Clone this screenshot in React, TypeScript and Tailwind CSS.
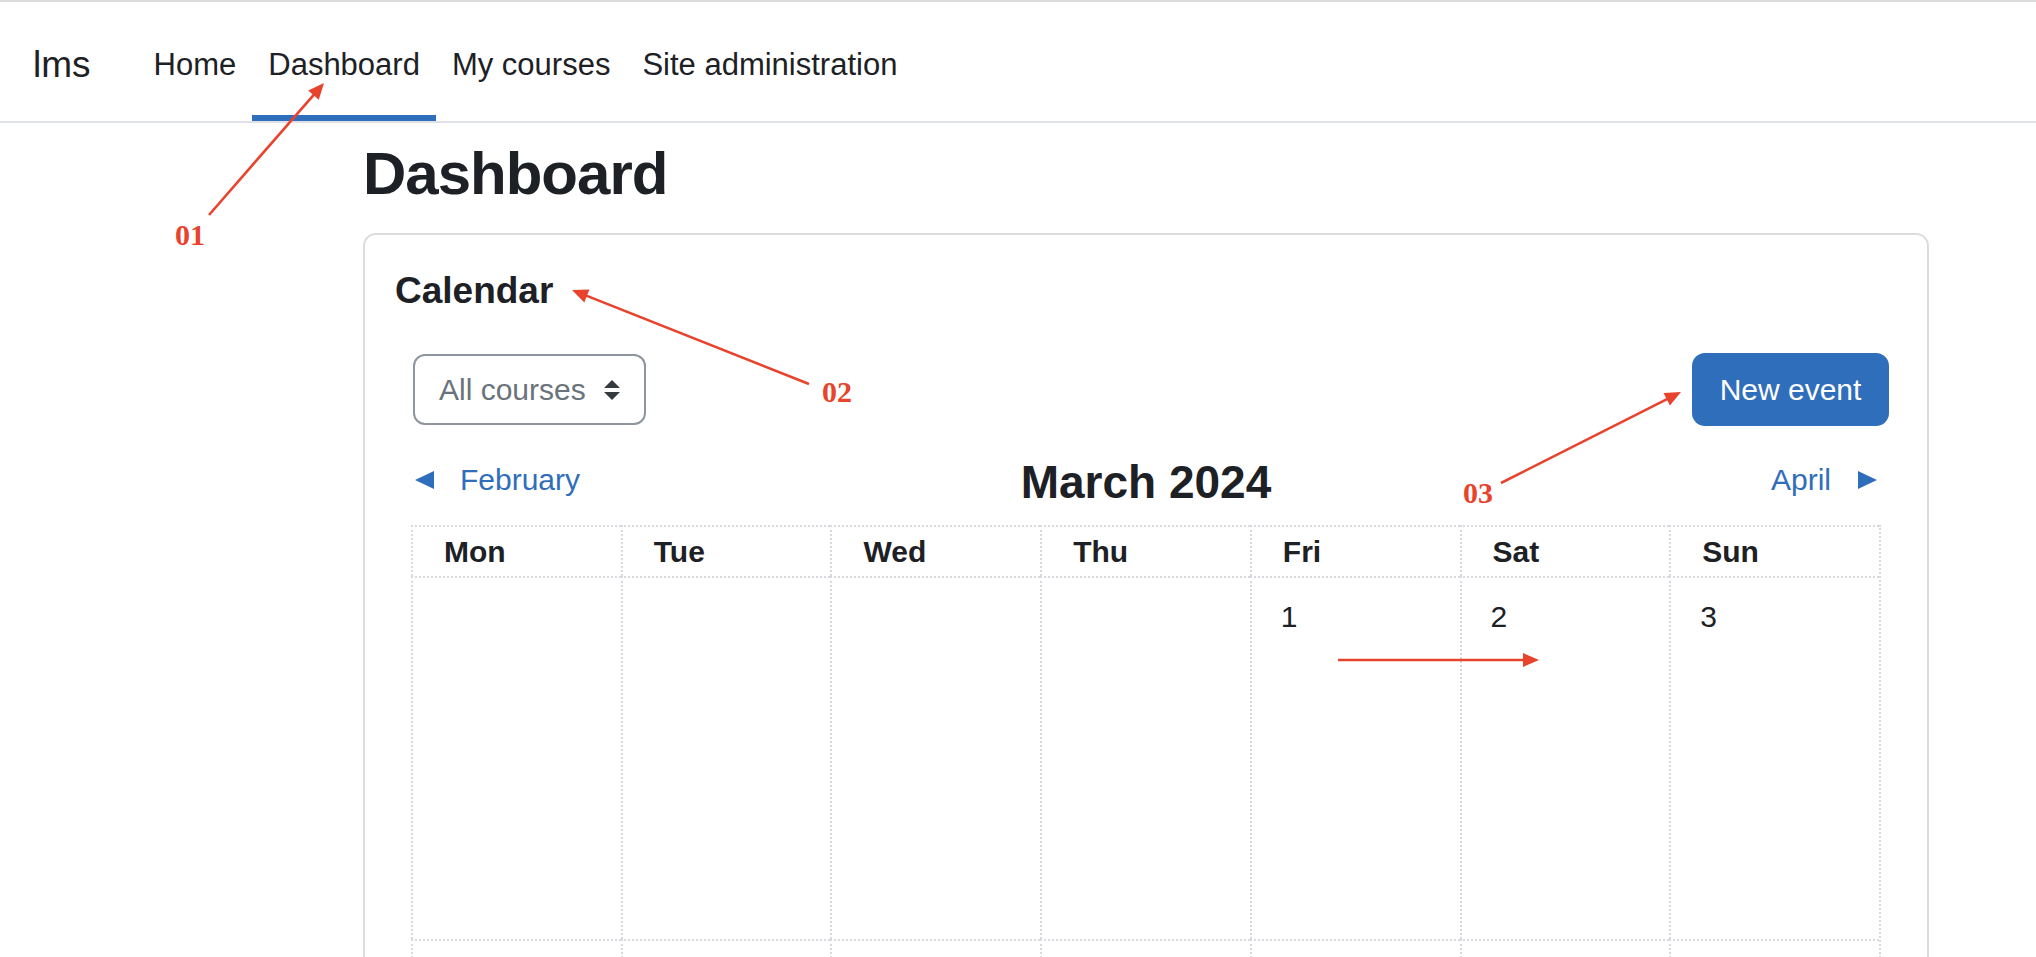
import React from 'react'

const navLinks = ['Home', 'Dashboard', 'My courses', 'Site administration']
const days = ['Mon', 'Tue', 'Wed', 'Thu', 'Fri', 'Sat', 'Sun']

// march 2024 starts on a friday, only the first week is in view
const firstWeek: (number | null)[] = [null, null, null, null, 1, 2, 3]

type ArrowProps = { x1: number; y1: number; x2: number; y2: number }

const Arrow = ({ x1, y1, x2, y2 }: ArrowProps) => {
  const len = Math.hypot(x2 - x1, y2 - y1)
  const ux = (x2 - x1) / len
  const uy = (y2 - y1) / len
  const bx = x2 - ux * 16
  const by = y2 - uy * 16
  const head = `${x2},${y2} ${bx - uy * 7},${by + ux * 7} ${bx + uy * 7},${by - ux * 7}`
  return (
    <>
      <line x1={x1} y1={y1} x2={bx + ux * 2} y2={by + uy * 2} stroke="#e8432d" strokeWidth={2.6} />
      <polygon points={head} fill="#e8432d" />
    </>
  )
}

const Annotations = () => {
  return (
    <svg className="absolute left-0 top-0 pointer-events-none" width={2036} height={957}>
      <Arrow x1={209} y1={215} x2={324} y2={83} />
      <Arrow x1={809} y1={384} x2={572} y2={290} />
      <Arrow x1={1501} y1={483} x2={1681} y2={392} />
      <Arrow x1={1338} y1={660} x2={1539} y2={660} />
      <g fill="#e8432d" fontFamily="'Liberation Serif', 'Times New Roman', serif" fontWeight="bold" fontSize={30}>
        <text x={175} y={245}>01</text>
        <text x={822} y={402}>02</text>
        <text x={1463} y={503}>03</text>
      </g>
    </svg>
  )
}

const Triangle = ({ dir }: { dir: 'left' | 'right' }) => (
  <svg width={19} height={18} viewBox="0 0 19 18">
    {dir === 'left' ? <polygon points="0,9 19,0 19,18" fill="#2f6ebb" /> : <polygon points="19,9 0,0 0,18" fill="#2f6ebb" />}
  </svg>
)

export default function App() {
  return (
    <div className="relative h-screen w-full overflow-hidden bg-white text-[#1d2125] font-['Liberation_Sans',Arial,sans-serif]">
      {/* top navbar */}
      <header className="flex h-[123px] border-t-2 border-b-2 border-t-[#dcdcdc] border-b-[#dee2e6]">
        <div className="flex items-center pl-[33px] mr-[47px] pt-[12px] pb-[6px] text-[37px] leading-[37px]">lms</div>
        {navLinks.map((l) => (
          <div
            key={l}
            className={
              'flex items-center px-[16px] pt-[12px] border-b-[6px] text-[31px] leading-[31px] ' +
              (l === 'Dashboard' ? 'border-b-[#2f6ebb]' : 'border-b-transparent')
            }
          >
            {l}
          </div>
        ))}
      </header>

      <main className="pl-[363px] pr-[107px]">
        <h1 className="mt-[21px] text-[60px] leading-[60px] font-bold tracking-[-1px]">Dashboard</h1>

        <section className="mt-[29px] border-2 border-[#dcdcdc] rounded-[13px] pt-[37px]">
          <h2 className="pl-[30px] text-[37px] leading-[37px] font-bold">Calendar</h2>

          <div className="px-[46px]">
            {/* filter + new event */}
            <div className="mt-[44px] flex items-center justify-between">
              <div className="ml-[2px] flex h-[71px] w-[233px] items-center border-2 border-[#8f959e] rounded-[12px] pl-[24px] text-[30px] leading-[30px] text-[#6a737b]">
                <span>All courses</span>
                <svg className="ml-[18px]" width={16} height={20} viewBox="0 0 16 20">
                  <polygon points="8,0 16,8 0,8" fill="#343a40" />
                  <polygon points="0,12 16,12 8,20" fill="#343a40" />
                </svg>
              </div>
              <button className="-mr-[8px] flex h-[73px] w-[197px] items-center justify-center rounded-[13px] bg-[#2f6ebb] text-[30px] leading-[30px] text-white">
                New event
              </button>
            </div>

            {/* month navigation */}
            <div className="mt-[33px] grid h-[46px] grid-cols-3 items-center">
              <div className="-mt-[5px] flex items-center pl-[4px] text-[30px] leading-[30px] text-[#2f6ebb]">
                <Triangle dir="left" />
                <span className="ml-[26px]">February</span>
              </div>
              <div className="text-center text-[46px] leading-[46px] font-bold">March 2024</div>
              <div className="-mt-[5px] flex items-center justify-end pr-[4px] text-[30px] leading-[30px] text-[#2f6ebb]">
                <span className="mr-[27px]">April</span>
                <Triangle dir="right" />
              </div>
            </div>

            {/* month grid */}
            <div className="mt-[20px] grid grid-cols-7 border-r-2 border-dotted border-[#d6d9dd]">
              {days.map((d) => (
                <div
                  key={d}
                  className="flex h-[51px] items-center border-l-2 border-t-2 border-dotted border-[#d6d9dd] pl-[31px] text-[30px] leading-[30px] font-bold"
                >
                  {d}
                </div>
              ))}
              {firstWeek.map((n, j) => (
                <div
                  key={'w1-' + j}
                  className="h-[363px] border-l-2 border-t-2 border-dotted border-[#d6d9dd] pl-[29px] pt-[24px] text-[30px] leading-[30px]"
                >
                  {n}
                </div>
              ))}
              {/* second week starts right at the bottom edge */}
              {days.map((d) => (
                <div key={'w2-' + d} className="h-[363px] border-l-2 border-t-2 border-dotted border-[#d6d9dd]" />
              ))}
            </div>
          </div>
        </section>
      </main>

      <Annotations />
    </div>
  )
}
